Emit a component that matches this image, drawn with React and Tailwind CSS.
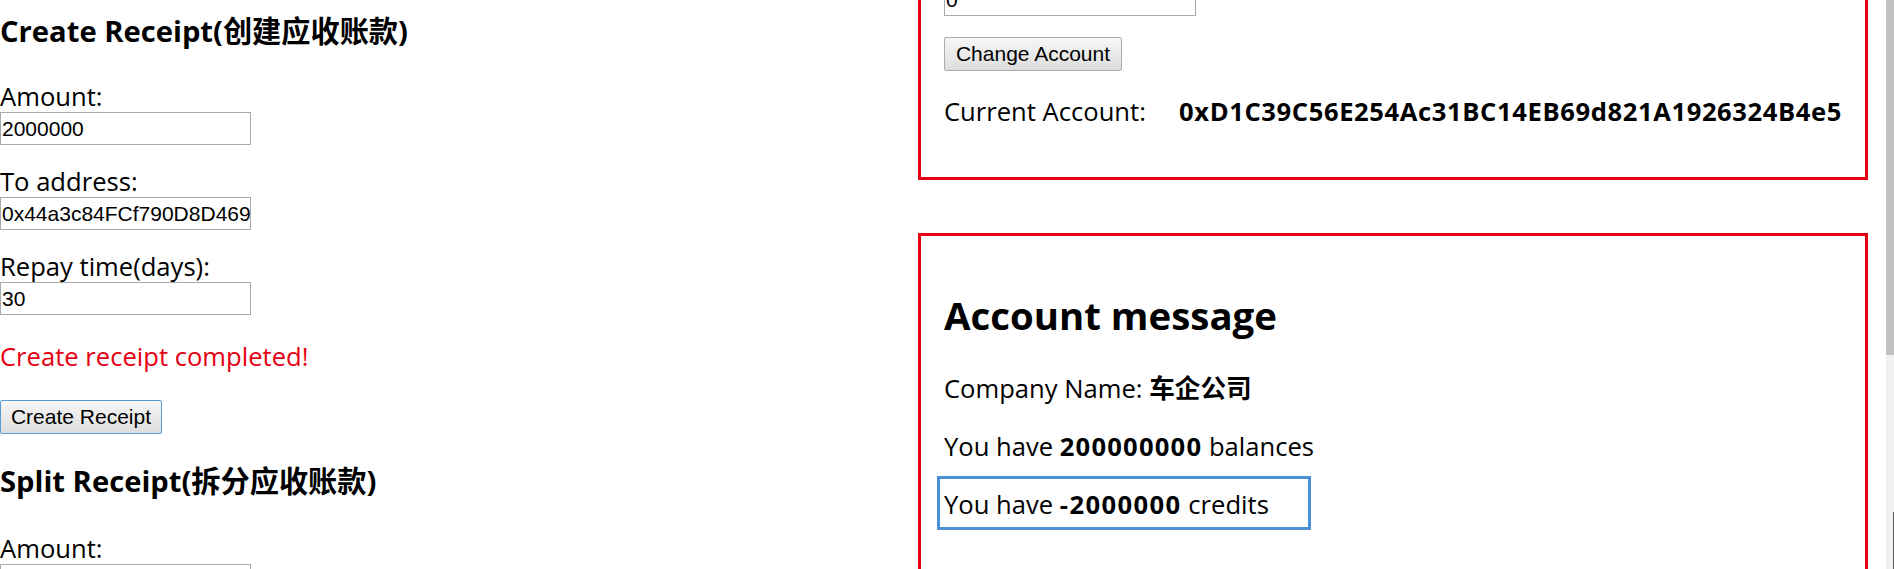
export default function App() {
  const label = "h-[31px] leading-[31px] text-[25.6px] whitespace-nowrap";
  const inputCls =
    "block w-[251px] h-[33px] border border-[#a9a9a9] bg-white pl-[1px] font-['Liberation_Sans',Arial,sans-serif] text-[21px] text-black outline-none";
  const btnBase =
    "block h-[34px] rounded-[2px] border bg-linear-to-b from-[#f7f7f7] to-[#dddddd] font-['Liberation_Sans',Arial,sans-serif] text-[21px] leading-[20px] text-black text-center";
  const h3 = "h-[36px] leading-[36px] text-[29.2px] font-bold whitespace-nowrap";

  return (
    <div className="w-[1894px] h-[569px] overflow-hidden bg-white flex text-black font-['Open_Sans','Noto_Sans_CJK_SC',sans-serif]">
      {/* Left column */}
      <div className="w-[918px] shrink-0">
        <h3 className={`mt-[13px] ${h3}`}>Create Receipt(创建应收账款)</h3>
        <div className={`mt-[32px] ${label}`}>Amount:</div>
        <input className={inputCls} defaultValue="2000000" readOnly />
        <div className={`mt-[21px] ${label}`}>To address:</div>
        <input className={inputCls} defaultValue="0x44a3c84FCf790D8D469" readOnly />
        <div className={`mt-[21px] ${label}`}>Repay time(days):</div>
        <input className={inputCls} defaultValue="30" readOnly />
        <div className={`mt-[26px] text-[#e60012] ${label}`}>Create receipt completed!</div>
        <button className={`mt-[28px] w-[162px] border-[#5b9bd5] ${btnBase}`}>Create Receipt</button>
        <h3 className={`mt-[29px] ${h3}`}>Split Receipt(拆分应收账款)</h3>
        <div className={`mt-[34px] ${label}`}>Amount:</div>
        <input className={inputCls} defaultValue="" readOnly />
      </div>

      {/* Right column */}
      <div className="w-[950px] shrink-0">
        <div className="-mt-[40px] border-[3px] border-[#e60012] pl-[23px] pt-[20px] pb-[50px]">
          <input className={`${inputCls} !w-[252px]`} defaultValue="0" readOnly />
          <button className={`mt-[21px] w-[178px] border-[#adadad] ${btnBase}`}>Change Account</button>
          <div className={`mt-[25px] ${label}`}>
            <span className="inline-block w-[235px]">Current Account:</span>
            <b className="font-bold tracking-[0.6px]">0xD1C39C56E254Ac31BC14EB69d821A1926324B4e5</b>
          </div>
        </div>

        <div className="mt-[53px] h-[400px] border-[3px] border-[#e60012] pl-[23px] pt-[56px]">
          <h2 className="h-[46px] leading-[46px] text-[38.4px] font-bold whitespace-nowrap">Account message</h2>
          <div className={`mt-[35px] ${label}`}>
            Company Name: <b className="font-bold">车企公司</b>
          </div>
          <div className={`mt-[27px] ${label}`}>
            You have <b className="font-bold tracking-[1.2px]">200000000</b> balances
          </div>
          <div className="mt-[14px] -ml-[7px] w-[374px] h-[54px] border-[3px] border-[#4d90d6] pl-[4px] pt-[10px]">
            <div className={label}>
              You have <b className="font-bold tracking-[1.4px]">-2000000</b> credits
            </div>
          </div>
        </div>
      </div>

      {/* gap */}
      <div className="w-[18px] shrink-0" />

      {/* scrollbar (partially visible) */}
      <div className="w-[8px] shrink-0 flex flex-col bg-[#f1f1f1]">
        <div className="h-[355px] bg-[#c1c1c1]" />
        <div className="flex-1 flex justify-end">
          <div className="mt-[157px] w-[1px] h-[57px] bg-[#555555]" />
        </div>
      </div>
    </div>
  );
}
